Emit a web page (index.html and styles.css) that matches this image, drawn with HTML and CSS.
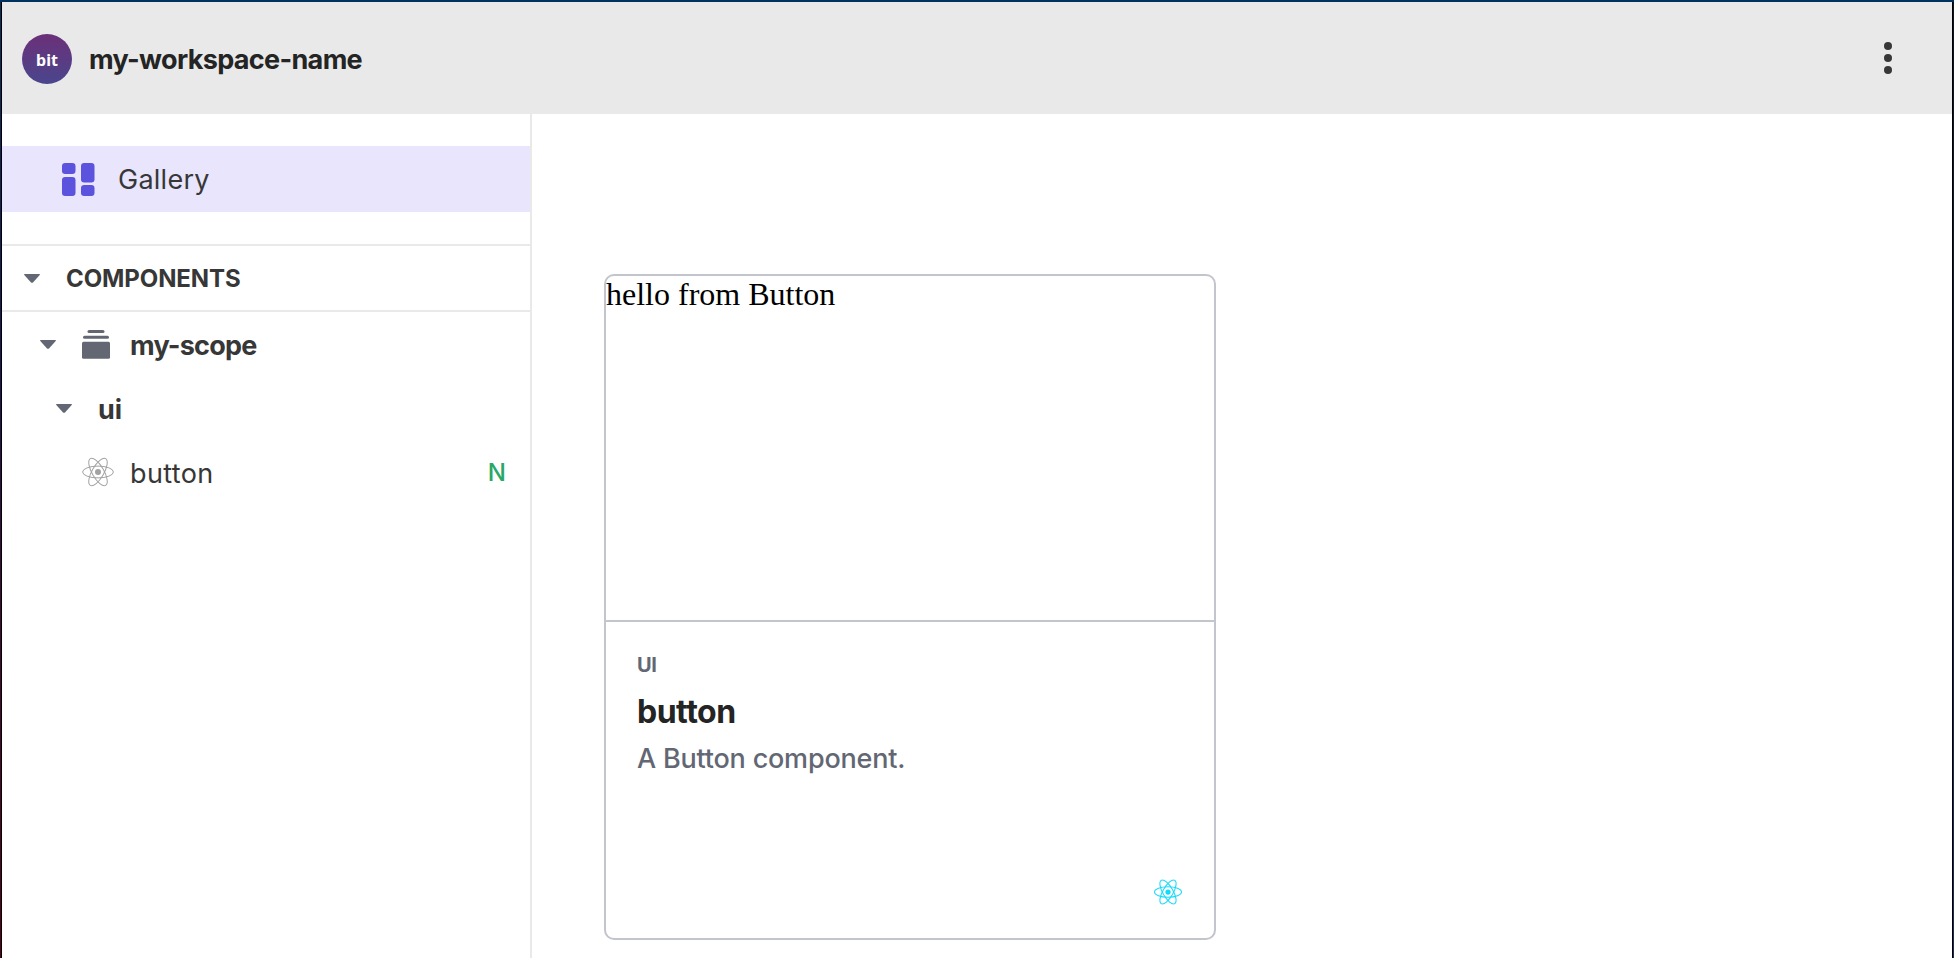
FILE: index.html
```html
<!DOCTYPE html>
<html lang="en">
<head>
<meta charset="utf-8">
<title>my-workspace-name</title>
<link rel="stylesheet" href="styles.css">
</head>
<body>
<svg width="0" height="0" class="defs" aria-hidden="true">
  <symbol id="atom" viewBox="-16 -16 32 32">
    <circle r="3"/>
    <g fill="none" stroke="currentColor">
      <ellipse rx="15.4" ry="5.9"/>
      <ellipse rx="15.4" ry="5.9" transform="rotate(60)"/>
      <ellipse rx="15.4" ry="5.9" transform="rotate(120)"/>
    </g>
  </symbol>
  <symbol id="caret" viewBox="0 0 16 9"><path d="M.6 0h14.8q.9.2.3 1L9 8.4q-1 .9-2 0L.3 1Q-.3.2.6 0z"/></symbol>
</svg>
<div class="window">
  <header class="topbar">
    <div class="logo"><span>bit</span></div>
    <h1 class="workspace">my-workspace-name</h1>
    <button class="menu" aria-label="Menu"><i></i><i></i><i></i></button>
  </header>
  <div class="body">
    <nav class="sidebar">
      <a class="gallery">
        <svg class="gallery-icon" viewBox="0 0 33 33"><rect width="13.5" height="11" rx="3.2"/><rect y="14" width="13.5" height="19" rx="3.2"/><rect x="19" width="13.5" height="19.5" rx="3.2"/><rect x="19" y="22" width="13.5" height="11" rx="3.2"/></svg>
        <span>Gallery</span>
      </a>
      <div class="section">
        <svg class="caret"><use href="#caret"/></svg>
        <span>COMPONENTS</span>
      </div>
      <div class="row scope">
        <svg class="caret"><use href="#caret"/></svg>
        <svg class="scope-icon" viewBox="0 0 28 29"><rect x="5.5" width="17" height="3" rx="1.5"/><rect x="1" y="5.7" width="26" height="3" rx="1.5"/><rect y="11.7" width="28" height="17" rx="1.5"/></svg>
        <span>my-scope</span>
      </div>
      <div class="row namespace">
        <svg class="caret"><use href="#caret"/></svg>
        <span>ui</span>
      </div>
      <div class="row component">
        <svg class="atom"><use href="#atom"/></svg>
        <span>button</span>
        <b class="status">N</b>
      </div>
    </nav>
    <main class="content">
      <article class="card">
        <div class="preview">hello from Button</div>
        <div class="details">
          <div class="kind">UI</div>
          <h2 class="name">button</h2>
          <p class="desc">A Button component.</p>
          <svg class="atom env"><use href="#atom"/></svg>
        </div>
      </article>
    </main>
  </div>
</div>
</body>
</html>
```
FILE: styles.css
```css
* { box-sizing: border-box; }
body {
  margin: 0;
  height: 958px;
  padding: 2px 1px 0;
  overflow: hidden;
  font-family: Inter, "Open Sans", sans-serif;
  color: #373737;
  background:
    linear-gradient(#003260, #003260) 0 0 / 100% 2px no-repeat,
    linear-gradient(#0a2f5c, #1b1650 38%, #3b0b38 60%, #58001c) 0 0 / 1px 100% no-repeat,
    linear-gradient(#0c1420, #1c2c60) 100% 0 / 1px 100% no-repeat;
}
.defs { position: absolute; }
.window {
  display: flex;
  flex-direction: column;
  height: 956px;
  border: solid #000;
  border-width: 0 1px;
  background: #fff;
}
.topbar {
  display: flex;
  align-items: center;
  flex: 0 0 112px;
  padding: 0 48px 0 20px;
  background: #e9e9e9;
}
.logo {
  display: grid;
  place-items: center;
  width: 50px;
  height: 50px;
  margin-top: 2px;
  border-radius: 50%;
  background: linear-gradient(#6b3078, #4a468d);
  color: #fff;
  font: 700 16px/20px "Noto Sans", sans-serif;
}
.logo span { padding-top: 1px; }
.workspace {
  margin: 0 0 0 17px;
  padding-top: 3px;
  color: #242424;
  font-size: 27px;
  font-weight: 700;
  line-height: 36px;
  letter-spacing: -.65px;
}
.menu {
  display: flex;
  flex-direction: column;
  align-items: center;
  gap: 4px;
  width: 32px;
  margin-left: auto;
  padding: 0;
  border: 0;
  background: none;
}
.menu i { width: 8px; height: 8px; border-radius: 50%; background: #373737; }
.body { display: flex; flex: 1; min-height: 0; }
.sidebar {
  flex: 0 0 530px;
  padding-top: 32px;
  border-right: 2px solid #e9e9e9;
}
.gallery {
  display: flex;
  align-items: center;
  height: 66px;
  padding-left: 60px;
  gap: 23px;
  background: #e8e5fd;
  font-size: 27px;
  letter-spacing: .25px;
}
.gallery-icon { width: 33px; height: 33px; fill: #5b52de; }
.section {
  display: flex;
  align-items: center;
  height: 68px;
  margin-top: 32px;
  padding-left: 22px;
  gap: 26px;
  border: solid #e9e9e9;
  border-width: 2px 0;
  font-size: 24px;
  font-weight: 700;
  letter-spacing: -.1px;
}
.caret { width: 16px; height: 9px; flex: none; fill: #626773; }
.row {
  display: flex;
  align-items: center;
  height: 64px;
  font-size: 27px;
}
.row span { padding-top: 2px; }
.scope { padding-left: 38px; font-weight: 700; letter-spacing: -.75px; }
.scope-icon { width: 28px; height: 29px; margin: 0 20px 0 26px; fill: #626773; }
.namespace { padding-left: 54px; gap: 26px; font-weight: 700; }
.component { padding: 0 24px 0 80px; }
.component span { margin-left: 16px; letter-spacing: .35px; }
.atom { width: 32px; height: 32px; color: #a2a2a2; fill: currentColor; stroke-width: 1; }
.status { margin-left: auto; color: #27a866; font-size: 24px; font-weight: 500; }
.content { flex: 1; padding: 160px 72px 0; }
.card {
  display: flex;
  flex-direction: column;
  width: 612px;
  height: 666px;
  border: 2px solid #c3c5cc;
  border-radius: 10px;
}
.preview {
  height: 346px;
  border-bottom: 2px solid #c3c5cc;
  color: #000;
  font: 32px/36px "Liberation Serif", serif;
}
.details {
  display: flex;
  flex: 1;
  flex-direction: column;
  padding: 30px 32px 32px 31px;
  color: #626773;
}
.kind { font-size: 20px; font-weight: 700; line-height: 26px; letter-spacing: -.5px; }
.name { margin: 14px 0 0; color: #242424; font-size: 32px; font-weight: 700; line-height: 40px; letter-spacing: -.5px; }
.desc { margin: 9px 0 0; font-size: 27px; line-height: 36px; font-weight: 500; letter-spacing: -.2px; }
.env { width: 28px; height: 28px; margin: auto 0 0 auto; color: #12dafb; stroke-width: 1.2; }
```
